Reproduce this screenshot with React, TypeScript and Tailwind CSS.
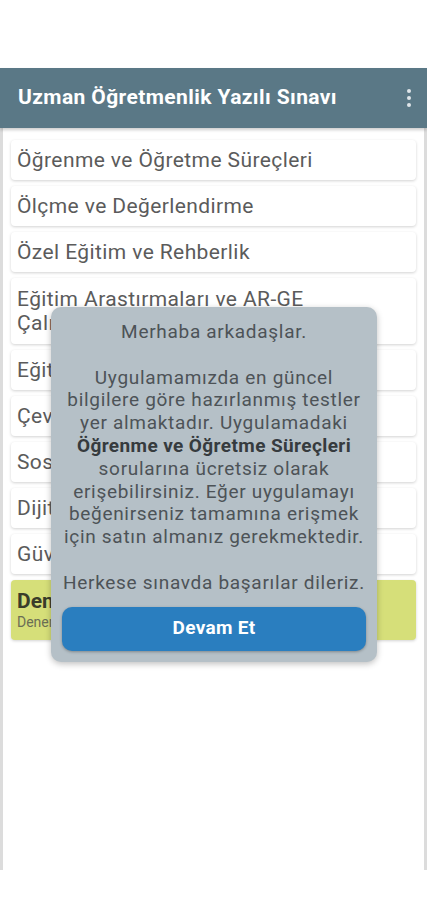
import React from "react";

const subjects: string[][] = [
  ["Öğrenme ve Öğretme Süreçleri"],
  ["Ölçme ve Değerlendirme"],
  ["Özel Eğitim ve Rehberlik"],
  ["Eğitim Arastırmaları ve AR-GE", "Çalışmaları"],
  ["Eğitim Programları ve Öğretim"],
  ["Çevre Eğitimi ve İklim Değişikliği"],
  ["Sosyal Duygusal Öğrenme"],
  ["Dijital Okuryazarlık"],
  ["Güvenli Okul Ortamı"],
];

const Notice = () => (
  <div className="absolute left-[48px] top-[239px] w-[326px] rounded-[10px] bg-[#b5c0c7] px-[11px] pt-[14px] pb-[11px] shadow-[0_2px_6px_rgba(0,0,0,0.25)]">
    <div className="text-center text-[19px] leading-[22.8px] tracking-[0.7px] text-[#4d5357]">
      <p>Merhaba arkadaşlar.</p>
      <p className="mt-[22.8px]">
        Uygulamamızda en güncel
        <br />
        bilgilere göre hazırlanmış testler
        <br />
        yer almaktadır. Uygulamadaki
        <br />
        <b className="tracking-[0.4px] text-[#363b3e]">Öğrenme ve Öğretme Süreçleri</b>
        <br />
        sorularına ücretsiz olarak
        <br />
        erişebilirsiniz. Eğer uygulamayı
        <br />
        beğenirseniz tamamına erişmek
        <br />
        için satın almanız gerekmektedir.
      </p>
      <p className="mt-[22.8px]">Herkese sınavda başarılar dileriz.</p>
    </div>
    <button className="mt-[12px] flex h-[44px] w-full items-center justify-center rounded-[10px] bg-[#2a7ebf] text-[19px] font-bold tracking-[0.3px] text-white shadow-[0_1px_3px_rgba(0,0,0,0.3)]">
      Devam Et
    </button>
  </div>
);

export default function App() {
  return (
    <div
      className="h-[900px] w-[427px] bg-white"
      style={{ fontFamily: "Roboto, 'Noto Sans', sans-serif" }}
    >
      <div className="h-[68px]" />
      <div className="relative h-[802px] border-x-[3px] border-[#dcdcdc] bg-white">
        <header className="-mx-[3px] flex h-[60px] items-center justify-between bg-[#5a7886] pl-[18px] pr-[16px] shadow-[0_2px_3px_rgba(0,0,0,0.2)]">
          <h1 className="text-[21px] font-bold tracking-[0.4px] text-white">
            Uzman Öğretmenlik Yazılı Sınavı
          </h1>
          <div className="flex flex-col gap-[3px]">
            <span className="h-[4px] w-[4px] rounded-full bg-[#dfe6ea]" />
            <span className="h-[4px] w-[4px] rounded-full bg-[#dfe6ea]" />
            <span className="h-[4px] w-[4px] rounded-full bg-[#dfe6ea]" />
          </div>
        </header>
        <div className="flex flex-col gap-[6px] px-[8px] pt-[12px]">
          {subjects.map((lines, i) => (
            <div
              key={i}
              className={`flex flex-col justify-center rounded-[4px] bg-white px-[6px] text-[21px] leading-[24px] tracking-[0.4px] text-[#5b5b5b] shadow-[0_1px_3px_rgba(0,0,0,0.18)] ${
                lines.length > 1 ? "py-[9px]" : "py-[8px]"
              }`}
            >
              {lines.map((l) => (
                <span key={l}>{l}</span>
              ))}
            </div>
          ))}
          <div className="flex h-[60px] flex-col justify-center rounded-[4px] bg-[#d6df79] px-[6px] shadow-[0_1px_3px_rgba(0,0,0,0.18)]">
            <span className="text-[21px] font-bold leading-[24px] text-[#3a3d2a]">
              Deneme Sınavları
            </span>
            <span className="text-[14px] leading-[18px] text-[#6b6e55]">
              Deneme sınavlarını çözerek kendinizi test edin
            </span>
          </div>
        </div>
        <Notice />
      </div>
    </div>
  );
}
